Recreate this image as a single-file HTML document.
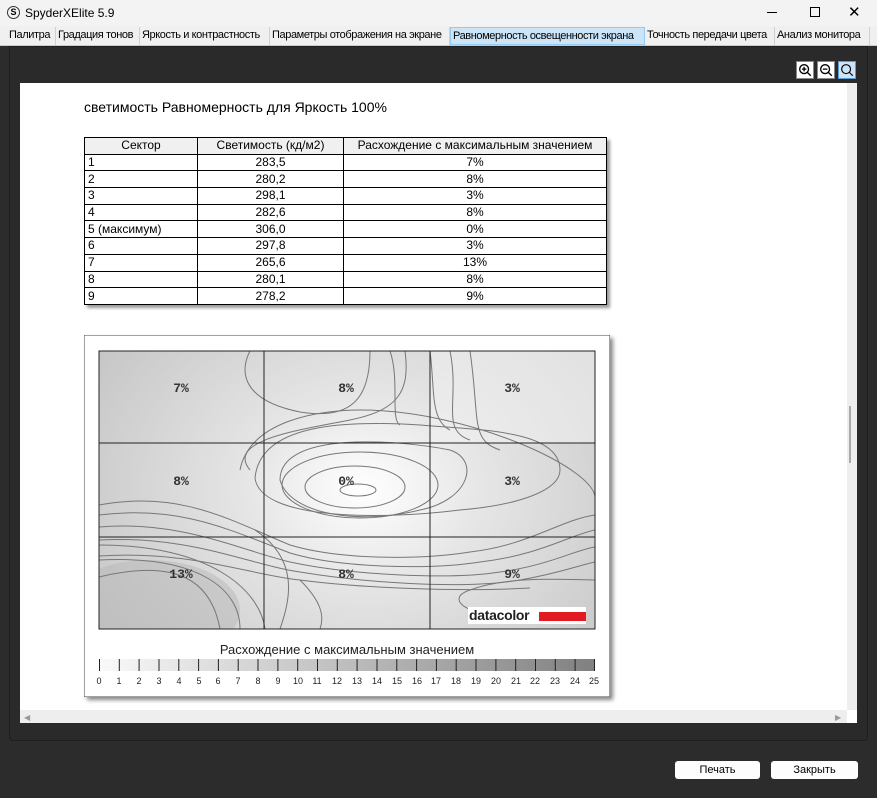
<!DOCTYPE html>
<html><head><meta charset="utf-8"><style>
*{margin:0;padding:0;box-sizing:border-box}
body{width:877px;height:798px;background:#2c2c2c;font-family:"Liberation Sans",sans-serif;position:relative;overflow:hidden}
.a{position:absolute}
#title{left:0;top:0;width:877px;height:26px;background:#f3f3f3;font-size:12px;color:#000}
#tabs{left:0;top:26px;width:877px;height:20px;background:#f0f0f0;border-bottom:1px solid #ccc}
.tab{position:absolute;top:1px;height:18px;font-size:11px;line-height:17px;border-right:1px solid #d0d0d0;padding-left:2px;white-space:nowrap;letter-spacing:-0.4px;overflow:hidden}
#panel{left:9px;top:46px;width:859px;height:695px;background:#2a2a2a;border-radius:0 0 4px 4px;border:1px solid #1e1e1e}
#content{left:20px;top:83px;width:837px;height:640px;background:#fff}
table{border-collapse:collapse;font-size:12px}
td{border:1px solid #000;height:16.7px;padding:0 3px;line-height:15px}
.btn{top:761px;height:18px;background:#fdfdfd;border-radius:3px;font-size:11px;text-align:center;line-height:18px}
.zi{top:61px;width:18px;height:18px;background:#fff;border:1px solid #888}
</style></head><body>
<div id="title" class="a">
 <div class="a" style="left:7px;top:6px;width:13px;height:13px;border:1px solid #333;border-radius:50%;font-size:9px;text-align:center;line-height:11px;font-weight:bold">S</div>
 <div class="a" style="left:25px;top:6px">SpyderXElite 5.9</div>
 <div class="a" style="left:767px;top:12px;width:10px;height:1px;background:#000"></div>
 <div class="a" style="left:810px;top:7px;width:10px;height:10px;border:1px solid #000"></div>
 <div class="a" style="left:848px;top:3px;font-size:15px">✕</div>
</div>
<div id="tabs" class="a">
 <div class="tab" style="left:7px;width:49px">Палитра</div>
 <div class="tab" style="left:56px;width:84px">Градация тонов</div>
 <div class="tab" style="left:140px;width:130px">Яркость и контрастность</div>
 <div class="tab" style="left:270px;width:180px">Параметры отображения на экране</div>
 <div class="tab" style="left:450px;width:195px;background:#cce4f7;border:1px solid #99c9ef">Равномерность освещенности экрана</div>
 <div class="tab" style="left:645px;width:130px">Точность передачи цвета</div>
 <div class="tab" style="left:775px;width:95px">Анализ монитора</div>
</div>
<div id="panel" class="a"></div>
<svg class="a zi" style="left:796px" viewBox="0 0 18 18"><circle cx="8" cy="8" r="5" fill="none" stroke="#000" stroke-width="1.5"/><path d="M11.5 11.5l4 4M5.5 8h5M8 5.5v5" stroke="#000" stroke-width="1.5"/></svg>
<svg class="a zi" style="left:817px" viewBox="0 0 18 18"><circle cx="8" cy="8" r="5" fill="none" stroke="#000" stroke-width="1.5"/><path d="M11.5 11.5l4 4M5.5 8h5" stroke="#000" stroke-width="1.5"/></svg>
<svg class="a zi" style="left:838px;background:#cce4f7;border-color:#5a9bd5" viewBox="0 0 18 18"><circle cx="8" cy="8" r="5" fill="none" stroke="#000" stroke-width="1.3"/><path d="M11.5 11.5l4 4" stroke="#000" stroke-width="1.3"/></svg>
<div id="content" class="a">
 <div class="a" style="left:827px;top:0;width:10px;height:627px;background:#eee"></div>
 <div class="a" style="left:829px;top:323px;width:2px;height:57px;background:#aaa"></div>
 <div class="a" style="left:0;top:627px;width:827px;height:13px;background:#eee"></div>
 <div class="a" style="left:4px;top:630px;font-size:8px;color:#999">◀</div>
 <div class="a" style="left:815px;top:630px;font-size:8px;color:#999">▶</div>
 <div class="a" style="left:64px;top:16px;font-size:14px;color:#000">светимость Равномерность для Яркость 100%</div>
 <table class="a" style="left:64px;top:54px;width:523px;box-shadow:3px 3px 3px #999">
  <tr style="background:#f0f0f0"><td style="width:113px;text-align:center">Сектор</td><td style="width:146px;text-align:center">Светимость (кд/м2)</td><td style="text-align:center">Расхождение с максимальным значением</td></tr>
  <tr><td>1</td><td align=center>283,5</td><td align=center>7%</td></tr>
  <tr><td>2</td><td align=center>280,2</td><td align=center>8%</td></tr>
  <tr><td>3</td><td align=center>298,1</td><td align=center>3%</td></tr>
  <tr><td>4</td><td align=center>282,6</td><td align=center>8%</td></tr>
  <tr><td>5 (максимум)</td><td align=center>306,0</td><td align=center>0%</td></tr>
  <tr><td>6</td><td align=center>297,8</td><td align=center>3%</td></tr>
  <tr><td>7</td><td align=center>265,6</td><td align=center>13%</td></tr>
  <tr><td>8</td><td align=center>280,1</td><td align=center>8%</td></tr>
  <tr><td>9</td><td align=center>278,2</td><td align=center>9%</td></tr>
 </table>
 <svg class="a" style="left:64px;top:252px;box-shadow:3px 3px 4px #888" width="526" height="362" viewBox="84 335 526 362">
  <defs>
   <radialGradient id="g" cx="365" cy="490" r="330" gradientUnits="userSpaceOnUse" gradientTransform="translate(365 490) scale(1 0.8) translate(-365 -490)">
    <stop offset="0" stop-color="#fff"/><stop offset="0.35" stop-color="#e6e6e6"/><stop offset="1" stop-color="#c4c4c4"/>
   </radialGradient>
   <linearGradient id="lg" x1="0" x2="1"><stop offset="0" stop-color="#fafafa"/><stop offset="1" stop-color="#808080"/></linearGradient>
   <clipPath id="cp"><rect x="99" y="351" width="496" height="278"/></clipPath>
  </defs>
  <rect x="84" y="335" width="526" height="362" fill="#fff" stroke="#444"/>
  <rect x="99" y="351" width="496" height="278" fill="url(#g)"/>
  <g clip-path="url(#cp)">
  <rect x="430" y="351" width="165" height="92" fill="#f0f0f0" opacity=".6"/>
  <ellipse cx="150" cy="610" rx="90" ry="50" fill="#b8b8b8" opacity=".5"/>
  <g fill="none" stroke="#777" stroke-width="1">
   <ellipse cx="358" cy="490" rx="18" ry="6"/>
   <ellipse cx="355" cy="487" rx="50" ry="21"/>
   <ellipse cx="360" cy="485" rx="78" ry="33"/>
   <path d="M280 480 C280 430 400 440 450 450 C480 460 470 500 420 510 C360 525 290 515 280 480Z"/>
   <path d="M255 478 C260 425 340 420 420 425 C480 430 560 430 560 470 C560 490 520 505 460 510 C380 520 260 520 255 478Z"/>
   <path d="M240 470 C250 420 320 410 360 410 M360 410 C470 410 600 470 595 500"/>
   <path d="M99 505 C180 490 230 520 290 545 C340 560 420 560 470 552 C530 545 560 520 595 515"/>
   <path d="M99 515 C180 505 230 530 290 553 C340 568 430 570 480 562 C540 555 570 535 595 530"/>
   <path d="M99 527 C180 520 240 550 290 562 C350 575 450 580 500 572 C550 565 575 550 595 547"/>
   <path d="M99 540 C190 535 250 565 300 572 C360 582 460 590 520 580 C560 573 580 565 595 562"/>
   <path d="M99 556 C190 550 250 575 300 580 C360 588 460 592 530 588"/>
   <path d="M99 577 C170 560 210 575 220 629"/>
   <path d="M99 560 C200 555 240 590 240 629"/>
   <path d="M99 545 C210 545 260 590 265 629"/>
   <path d="M300 580 C320 600 325 615 320 629"/>
   <path d="M255 530 C300 560 290 600 280 629"/>
   <path d="M250 470 C225 440 300 430 350 420 C400 410 410 390 405 351"/>
   <path d="M250 351 C240 370 240 400 300 412 C350 420 370 400 370 351"/>
   <path d="M390 351 C400 380 390 420 400 425"/>
   <path d="M430 351 C435 390 430 420 450 430"/>
   <path d="M450 351 C460 400 440 430 470 440"/>
   <path d="M470 351 C480 420 470 440 500 450"/>
   <path d="M580 619 C470 625 440 600 470 590 C510 575 570 580 595 580"/>
  </g>
  </g>
  <g stroke="#222" stroke-width="1" fill="none">
   <rect x="99" y="351" width="496" height="278"/>
   <line x1="264" y1="351" x2="264" y2="629"/><line x1="430" y1="351" x2="430" y2="629"/>
   <line x1="99" y1="443" x2="595" y2="443"/><line x1="99" y1="537" x2="595" y2="537"/>
  </g>
  <g font-family="Liberation Mono,monospace" font-size="13" font-weight="bold" fill="#333" text-anchor="middle">
   <text x="181" y="392">7%</text><text x="346" y="392">8%</text><text x="512" y="392">3%</text>
   <text x="181" y="485">8%</text><text x="346" y="485">0%</text><text x="512" y="485">3%</text>
   <text x="181" y="578">13%</text><text x="346" y="578">8%</text><text x="512" y="578">9%</text>
  </g>
  <rect x="468" y="607" width="118" height="17" fill="#fff"/>
  <text x="469" y="620" font-size="14" font-weight="bold" fill="#222" letter-spacing="-0.3">datacolor</text>
  <rect x="539" y="612" width="47" height="9" fill="#e21b23"/>
  <text x="347" y="654" font-size="13" fill="#222" text-anchor="middle">Расхождение с максимальным значением</text>
  <rect x="99" y="659" width="496" height="12" fill="url(#lg)"/>
  <g stroke="#222">
   <path d="M99.5 659v12M119.3 659v12M139.1 659v12M159 659v12M178.8 659v12M198.6 659v12M218.4 659v12M238.2 659v12M258 659v12M277.9 659v12M297.7 659v12M317.5 659v12M337.3 659v12M357.1 659v12M377 659v12M396.8 659v12M416.6 659v12M436.4 659v12M456.2 659v12M476 659v12M495.9 659v12M515.7 659v12M535.5 659v12M555.3 659v12M575.1 659v12M594.5 659v12"/>
  </g>
  <g font-size="9" fill="#222" text-anchor="middle">
   <text x="99" y="684">0</text><text x="119" y="684">1</text><text x="139" y="684">2</text><text x="159" y="684">3</text><text x="179" y="684">4</text><text x="199" y="684">5</text><text x="218" y="684">6</text><text x="238" y="684">7</text><text x="258" y="684">8</text><text x="278" y="684">9</text><text x="298" y="684">10</text><text x="317" y="684">11</text><text x="337" y="684">12</text><text x="357" y="684">13</text><text x="377" y="684">14</text><text x="397" y="684">15</text><text x="417" y="684">16</text><text x="436" y="684">17</text><text x="456" y="684">18</text><text x="476" y="684">19</text><text x="496" y="684">20</text><text x="516" y="684">21</text><text x="535" y="684">22</text><text x="555" y="684">23</text><text x="575" y="684">24</text><text x="594" y="684">25</text>
  </g>
 </svg>
</div>
<div class="a btn" style="left:675px;width:85px">Печать</div>
<div class="a btn" style="left:771px;width:87px">Закрыть</div>
</body></html>
